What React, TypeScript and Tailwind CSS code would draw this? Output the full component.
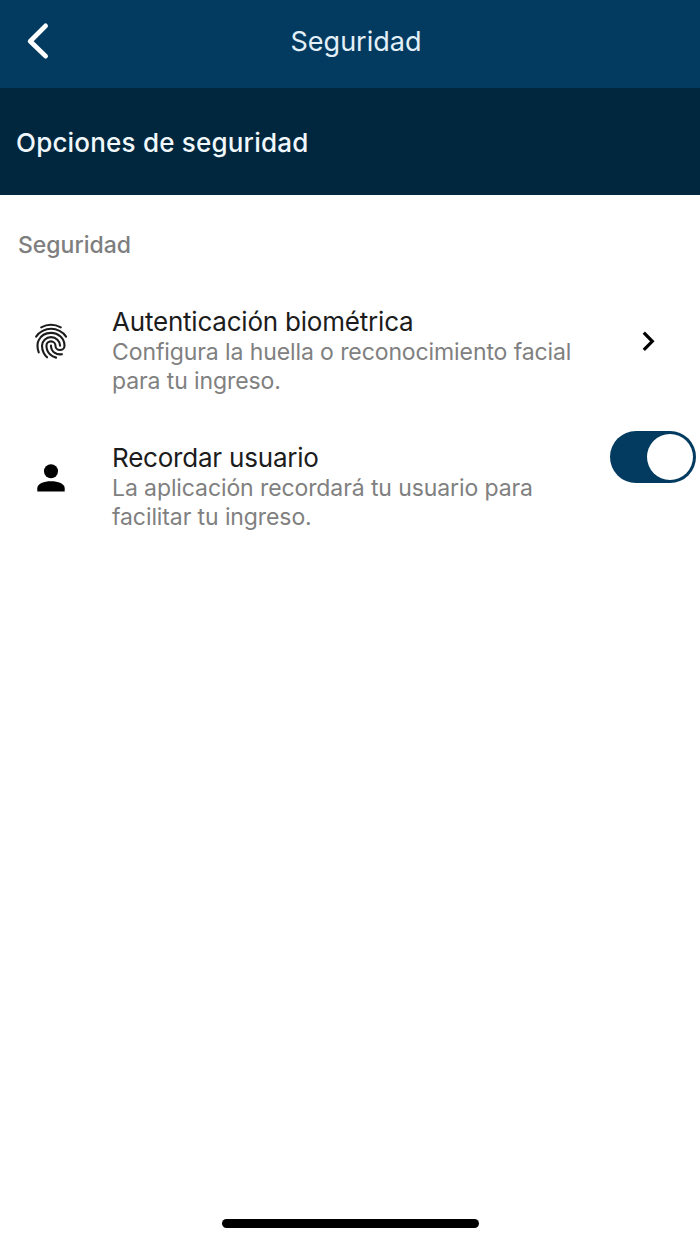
import type { ReactNode } from "react";

function Fingerprint() {
  return (
    <svg
      className="-mt-[18px] size-[42px] shrink-0"
      viewBox="0 0 24 24"
      fill="none"
      stroke="#1c1c1c"
      strokeWidth="1.2"
      strokeLinecap="round"
      strokeLinejoin="round"
    >
      <path d="M6.4 4.2C8.1 3.3 10 2.75 12 2.75s3.8.5 5.6 1.45" />
      <path d="M3.5 9.45c1-1.4 2.25-2.48 3.7-3.22 3-1.55 6.7-1.55 9.7 0 1.45.74 2.7 1.82 3.7 3.22" />
      <path d="M9.75 21.3c-.85-.85-1.28-1.38-1.9-2.5-.65-1.15-.99-2.6-.99-4.1 0-2.7 2.3-4.9 5.16-4.9s5.16 2.2 5.16 4.9" />
      <path d="M14.9 21.5c-1.5-.42-2.45-.92-3.5-1.95-1.3-1.3-2-3.05-2-4.89 0-1.35 1.15-2.44 2.58-2.44s2.58 1.1 2.58 2.44c0 1.35 1.15 2.44 2.58 2.44s2.58-1.09 2.58-2.44c0-4.05-3.48-7.33-7.75-7.33-3.03 0-5.8 1.7-7.06 4.3-.42.88-.63 1.9-.63 3.03 0 .83.07 2.15.71 3.87" />
      <path d="M12 14.66c0 1.7.83 3.25 2.2 4.17.8.54 1.72.8 2.85.8.27 0 .72-.03 1.17-.11" />
    </svg>
  );
}

function Row({ icon, title, lines, action }: { icon: ReactNode; title: string; lines: string[]; action: ReactNode }) {
  return (
    <div className="flex h-[136px]">
      <div className="flex h-[88px] w-[101px] shrink-0 items-center justify-center">{icon}</div>
      <div className="ml-[11px] flex-1 pt-px whitespace-nowrap">
        <h3 className="h-[31px] text-[26px] leading-[30px] tracking-[-0.21px] text-[#1c1c1c]">{title}</h3>
        <p className="text-[23px] leading-[28.8px] tracking-[-0.1px] text-[#808080]">
          {lines.map((line) => (
            <span key={line} className="block">{line}</span>
          ))}
        </p>
      </div>
      {action}
    </div>
  );
}

export default function App() {
  return (
    <div className="flex h-[1244px] w-[700px] flex-col bg-white font-['Inter',sans-serif]">
      <header className="grid h-[88px] grid-cols-3 items-center bg-[#033b60] pb-[5px]">
        <svg className="-mt-px ml-[24px]" width="28" height="42" viewBox="0 0 28 42" fill="none">
          <path d="M21.6 5.9 6.2 21.2 21.6 36.1" stroke="#fff" strokeWidth="4.8" strokeLinecap="round" strokeLinejoin="round" />
        </svg>
        <h1 className="pt-px pl-[12px] text-center text-[27px] whitespace-nowrap text-[#e4f0f8]">Seguridad</h1>
      </header>
      <div className="flex h-[107px] items-center bg-[#01273e] pt-[2px] pl-[16px]">
        <h2 className="text-[26px] font-medium tracking-[0.2px] whitespace-nowrap text-[#f1f8fc]">Opciones de seguridad</h2>
      </div>
      <main className="flex flex-1 flex-col">
        <div className="mt-[35px] mb-[46px] pl-[18px] text-[23px] leading-[30px] font-medium text-[#7e7e7e]">Seguridad</div>
        <Row
          icon={<Fingerprint />}
          title="Autenticación biométrica"
          lines={["Configura la huella o reconocimiento facial", "para tu ingreso."]}
          action={
            <svg className="mt-[22px] mr-[38px] shrink-0" width="26" height="26" viewBox="0 0 26 26" fill="none">
              <path d="M7.8 4.6 16.3 13.3 7.8 21.9" stroke="#000" strokeWidth="3.2" />
            </svg>
          }
        />
        <Row
          icon={
            <svg className="-mt-[17px]" width="30" height="30" viewBox="0 0 30 30">
              <circle cx="15" cy="8.3" r="7" />
              <path d="M1.3 28.5V25.2C1.3 20.8 8 18.3 15 18.3S28.7 20.8 28.7 25.2V28.5Z" />
            </svg>
          }
          title="Recordar usuario"
          lines={["La aplicación recordará tu usuario para", "facilitar tu ingreso."]}
          action={
            <button role="switch" aria-checked="true" className="mt-[-11px] mr-[4px] flex h-[52px] w-[86px] shrink-0 items-center justify-end rounded-full bg-[#033b60] pr-[3px]">
              <span className="size-[46px] rounded-full bg-white" />
            </button>
          }
        />
      </main>
      <footer className="flex h-[29px] justify-center">
        <div className="mt-[4px] h-[9px] w-[257px] rounded-full bg-black" />
      </footer>
    </div>
  );
}
